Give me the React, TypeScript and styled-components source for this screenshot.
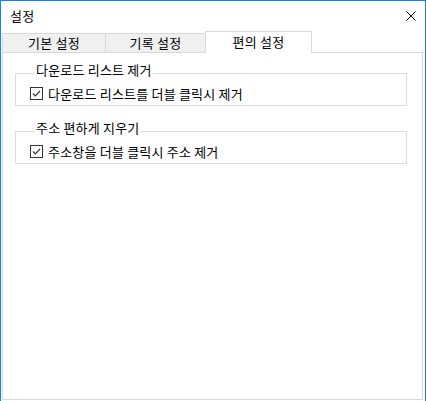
import React from "react";
import styled, { createGlobalStyle } from "styled-components";

const GlobalStyle = createGlobalStyle`
  html, body {
    margin: 0;
    padding: 0;
    background: #ffffff;
  }
  body {
    font-family: "Noto Sans CJK KR", "Noto Sans", sans-serif;
    font-size: 13px;
    letter-spacing: 0.2px;
    color: #000000;
  }
  * { box-sizing: border-box; }
`;

const Window = styled.div`
  width: 426px;
  height: 401px;
  display: flex;
  flex-direction: column;
  background: #ffffff;
  border: 1px solid #1883d7;
  border-bottom: none;
`;

const TitleBar = styled.div`
  height: 30px;
  flex: none;
  display: flex;
  align-items: center;
  justify-content: space-between;
  padding: 0 9px;
`;

const Title = styled.span`
  line-height: 14px;
`;

const CloseButton = styled.button`
  all: unset;
  display: flex;
  width: 10px;
  height: 10px;
`;

const TabStrip = styled.div`
  height: 21px;
  flex: none;
  display: flex;
  align-items: flex-end;
  padding-left: 1px;
`;

const Tab = styled.div<{ $active?: boolean; $width: number; $first?: boolean }>`
  width: ${(p) => p.$width}px;
  height: ${(p) => (p.$active ? 22 : 19)}px;
  margin-left: ${(p) => (p.$first ? 0 : -1)}px;
  margin-bottom: ${(p) => (p.$active ? -1 : 0)}px;
  border: 1px solid #d9d9d9;
  border-bottom: none;
  background: ${(p) => (p.$active ? "#ffffff" : "#f0f0f0")};
  position: ${(p) => (p.$active ? "relative" : "static")};
  z-index: ${(p) => (p.$active ? 1 : "auto")};
  display: flex;
  align-items: center;
  justify-content: center;
  line-height: 14px;
  padding-bottom: ${(p) => (p.$active ? 1 : 0)}px;
`;

const Panel = styled.div`
  flex: 1;
  margin: 0 2px 1px 1px;
  border: 1px solid #d9d9d9;
  background: #ffffff;
  padding: 0 15px 0 12px;
  display: flex;
  flex-direction: column;
`;

const GroupBox = styled.section<{ $top: number }>`
  margin-top: ${(p) => p.$top}px;
  border: 1px solid #dcdcdc;
  padding: 0 8px 5px 14px;
  display: flex;
  flex-direction: column;
`;

const Legend = styled.h3`
  margin: -12px 0 0 5px;
  padding: 0 1px;
  width: fit-content;
  height: 16px;
  line-height: 16px;
  font-size: 13px;
  font-weight: normal;
  background: #ffffff;
`;

const CheckRow = styled.label`
  margin-top: 9px;
  height: 13px;
  display: flex;
  align-items: center;
  gap: 5px;
  line-height: 13px;
  cursor: default;
`;

const CheckBox = styled.span`
  width: 13px;
  height: 13px;
  flex: none;
  border: 1px solid #333333;
  background: #ffffff;
  display: flex;
`;

const CheckMark = () => (
  <svg width="11" height="11" viewBox="0 0 11 11">
    <path d="M2 5.5 L4.3 7.8 L9 3" fill="none" stroke="#333333" strokeWidth="1.2" />
  </svg>
);

const CloseIcon = () => (
  <svg width="10" height="10" viewBox="0 0 10 10">
    <path d="M0.5 0.5 L9.5 9.5 M9.5 0.5 L0.5 9.5" stroke="#000000" strokeWidth="1" />
  </svg>
);

const groups = [
  { title: "다운로드 리스트 제거", label: "다운로드 리스트를 더블 클릭시 제거", top: 20 },
  { title: "주소 편하게 지우기", label: "주소창을 더블 클릭시 주소 제거", top: 25 },
];

const tabs = [
  { label: "기본 설정", width: 104 },
  { label: "기록 설정", width: 101 },
  { label: "편의 설정", width: 107, active: true },
];

export default function App() {
  return (
    <>
      <GlobalStyle />
      <Window>
        <TitleBar>
          <Title>설정</Title>
          <CloseButton aria-label="닫기">
            <CloseIcon />
          </CloseButton>
        </TitleBar>
        <TabStrip>
          {tabs.map((t, i) => (
            <Tab key={t.label} $width={t.width} $active={t.active} $first={i === 0}>
              {t.label}
            </Tab>
          ))}
        </TabStrip>
        <Panel>
          {groups.map((g) => (
            <GroupBox key={g.title} $top={g.top}>
              <Legend>{g.title}</Legend>
              <CheckRow>
                <CheckBox>
                  <CheckMark />
                </CheckBox>
                <span>{g.label}</span>
              </CheckRow>
            </GroupBox>
          ))}
        </Panel>
      </Window>
    </>
  );
}
